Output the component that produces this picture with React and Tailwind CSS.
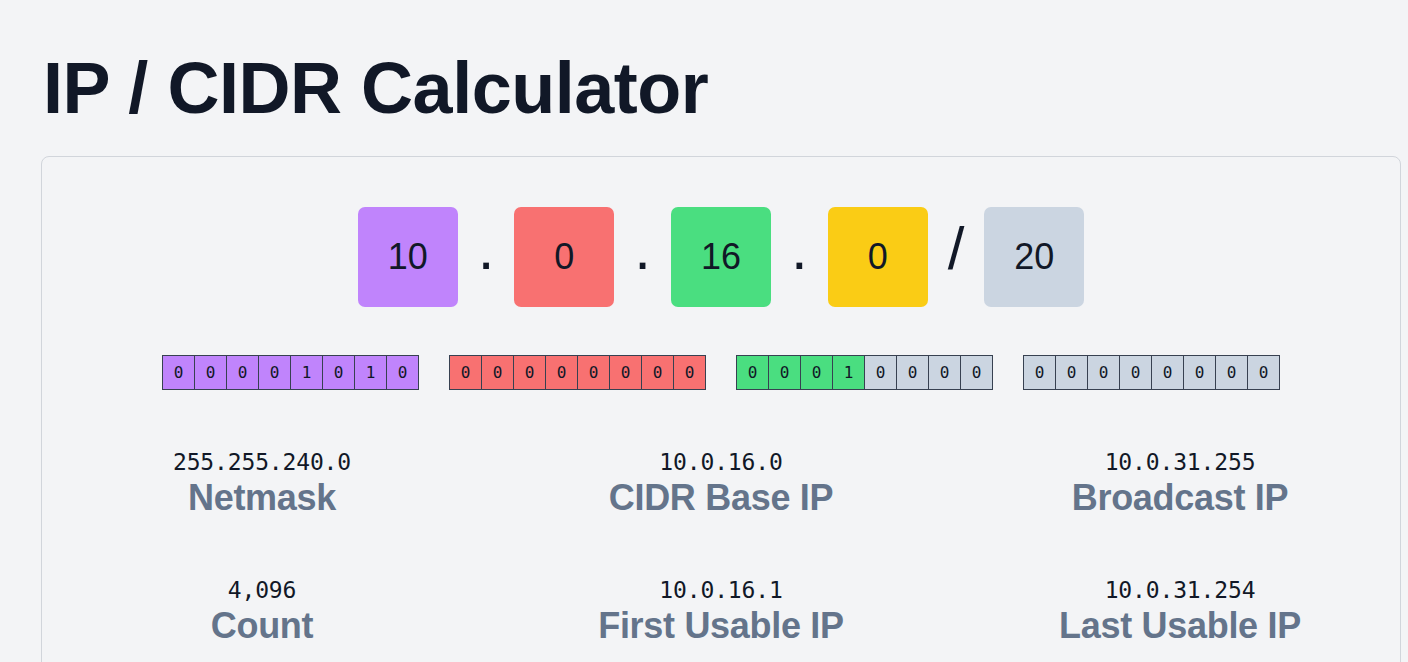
import React from "react";

const octets = [
  { v: 10, bg: "bg-[#c084fc]" },
  { v: 0, bg: "bg-[#f87171]" },
  { v: 16, bg: "bg-[#4ade80]" },
  { v: 0, bg: "bg-[#facc15]" },
];
const prefix = 20;

const stats = [
  { value: "255.255.240.0", label: "Netmask" },
  { value: "10.0.16.0", label: "CIDR Base IP" },
  { value: "10.0.31.255", label: "Broadcast IP" },
  { value: "4,096", label: "Count" },
  { value: "10.0.16.1", label: "First Usable IP" },
  { value: "10.0.31.254", label: "Last Usable IP" },
];

function Box({ children, bg }) {
  return (
    <div
      className={`w-[100px] h-[100px] rounded-[7px] flex items-center justify-center text-4xl text-[#111827] ${bg}`}
    >
      {children}
    </div>
  );
}

function Sep({ children }) {
  return <span className="text-6xl leading-none text-[#111827]">{children}</span>;
}

export default function App() {
  const sans = { fontFamily: '"Liberation Sans", Arial, sans-serif' };
  const mono = { fontFamily: '"DejaVu Sans Mono", monospace' };
  return (
    <div className="min-h-screen bg-[#f3f4f6] pl-[40px] pt-[52px]" style={sans}>
      <h1 className="pl-[3px] text-7xl leading-none font-bold tracking-[-0.47px] text-[#111827]">
        IP / CIDR Calculator
      </h1>
      <div className="mt-8 ml-px w-[1360px] rounded-lg border border-[#d1d5db] bg-[#f3f4f6] pt-[50px] pb-16">
        <div className="flex items-baseline justify-center gap-5">
          {octets.map((o, i) => (
            <React.Fragment key={i}>
              {i > 0 && <Sep>.</Sep>}
              <Box bg={o.bg}>{o.v}</Box>
            </React.Fragment>
          ))}
          <Sep>/</Sep>
          <Box bg="bg-[#cbd5e1]">{prefix}</Box>
        </div>

        <div className="mt-12 flex justify-center gap-[30px]" style={mono}>
          {octets.map((o, gi) => {
            const bits = o.v.toString(2).padStart(8, "0").split("");
            return (
              <div key={gi} className="flex">
                {bits.map((b, bi) => {
                  const inNet = gi * 8 + bi < prefix;
                  return (
                    <div
                      key={bi}
                      className={`w-[33px] h-[35px] border border-[#374151] flex items-center justify-center text-base text-[#111827] ${
                        bi > 0 ? "-ml-px" : ""
                      } ${inNet ? o.bg : "bg-[#cbd5e1]"}`}
                    >
                      {b}
                    </div>
                  );
                })}
              </div>
            );
          })}
        </div>

        <div className="mt-14 grid grid-cols-3 gap-x-[19px] gap-y-14">
          {stats.map((s, i) => (
            <div key={i} className="flex flex-col items-center">
              <div className="text-[23px] leading-8 tracking-[-0.15px] text-[#111827]" style={mono}>
                {s.value}
              </div>
              <div className="text-4xl leading-10 font-bold tracking-[-0.3px] text-[#64748b]">
                {s.label}
              </div>
            </div>
          ))}
        </div>
      </div>
    </div>
  );
}
